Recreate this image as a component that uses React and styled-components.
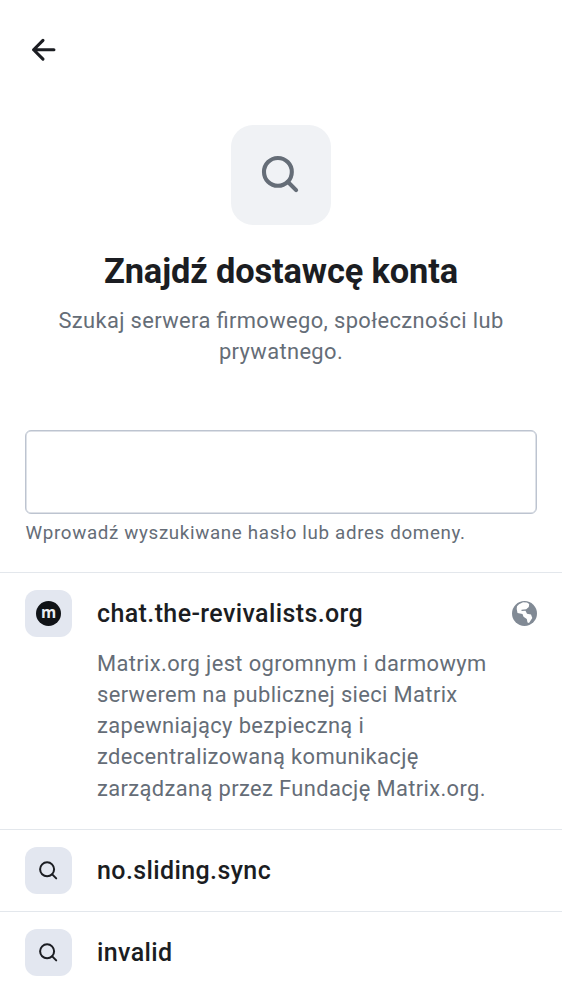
import React from 'react';
import styled, { createGlobalStyle } from 'styled-components';

const Global = createGlobalStyle`
  * { box-sizing: border-box; }
  body { margin: 0; background: #fff; font-family: Roboto, sans-serif; color: #1b1d22; }
`;

const Screen = styled.main`
  display: flex;
  flex-direction: column;
  width: 562px;
  height: 1000px;
  overflow: hidden;
`;

const TopBar = styled.header`
  display: flex;
  align-items: center;
  height: 100px;
  padding-left: 25px;
`;

const BackButton = styled.button`
  display: flex;
  padding: 0;
  border: 0;
  background: none;
  color: #1b1d22;
`;

const Hero = styled.section`
  display: flex;
  flex-direction: column;
  align-items: center;
  padding: 25px 25px 0;
  text-align: center;
`;

const HeroTile = styled.div`
  display: grid;
  place-items: center;
  width: 100px;
  height: 100px;
  border-radius: 22px;
  background: #f0f2f5;
  color: #656d77;
`;

const Title = styled.h1`
  margin: 24px 0 0;
  font-size: 34.4px;
  line-height: 44px;
  font-weight: 700;
  letter-spacing: -0.13px;
  white-space: nowrap;
`;

const Subtitle = styled.p`
  width: 470px;
  margin: 12px 0 0;
  font-size: 21.9px;
  line-height: 31.25px;
  letter-spacing: 0.37px;
  font-feature-settings: "liga" 1;
  color: #656d77;
`;

const Search = styled.label`
  display: flex;
  flex-direction: column;
  padding: 62px 25px 0;
`;

const SearchInput = styled.input`
  width: 512px;
  height: 84px;
  padding: 0 25px;
  border: 1px solid #bdc4d0;
  border-radius: 6px;
  box-shadow: inset 0 0 0 0.5px #bdc4d0;
  background: none;
  font: inherit;
  outline: none;
`;

const Hint = styled.span`
  margin: 7px 0 0 0.5px;
  font-size: 18.75px;
  line-height: 25px;
  letter-spacing: 0.66px;
  color: #656d77;
`;

const List = styled.ul`
  margin: 26px 0 0;
  padding: 0;
  list-style: none;
`;

const Item = styled.li`
  min-height: 82.4px;
  padding: 17px 25px ${p => (p.$tall ? 25 : 17)}px;
  border-top: 1px solid #e3e7ec;
`;

const Row = styled.div`
  display: flex;
  align-items: center;
  gap: 25px;
`;

const ItemTile = styled.div`
  display: grid;
  place-items: center;
  flex: none;
  width: 47px;
  height: 47px;
  border-radius: 12px;
  background: #e3e7f0;
`;

const ItemTitle = styled.span`
  flex: 1;
  padding-top: ${p => (p.$tall ? 2 : 0)}px;
  font-size: 25px;
  line-height: 37.5px;
  font-weight: 500;
  letter-spacing: 0.39px;
`;

const Description = styled.p`
  width: 400px;
  margin: 11px 0 0 72px;
  font-size: 21.9px;
  line-height: 31.25px;
  letter-spacing: 0.37px;
  color: #656d77;
`;

const MatrixMark = styled.span`
  display: flex;
  justify-content: center;
  width: 25px;
  height: 25px;
  border-radius: 50%;
  background: #101317;
  color: #e9edf2;
  font: 700 15.5px/23px "Open Sans", sans-serif;
`;

const BackIcon = () => (
  <svg width="37.5" height="37.5" viewBox="0 0 24 24" fill="none" stroke="currentColor" strokeWidth="2" strokeLinecap="round" strokeLinejoin="round">
    <path d="M11.5 6 5.5 12l6 6M5.5 12h13" />
  </svg>
);

const LargeSearchIcon = () => (
  <svg width="50" height="50" viewBox="0 0 50 50" fill="none" stroke="currentColor" strokeWidth="4.1" strokeLinecap="round">
    <circle cx="21.9" cy="21.9" r="13.9" />
    <path d="m32 32 8.1 8.1" />
  </svg>
);

const SearchIcon = () => (
  <svg width="25" height="25" viewBox="0 0 25 25" fill="none" stroke="currentColor" strokeWidth="2" strokeLinecap="round">
    <circle cx="11.1" cy="11.3" r="7" />
    <path d="m16.2 16.4 4 4" />
  </svg>
);

const GlobeIcon = () => (
  <svg width="25" height="25" viewBox="0 0 25 25">
    <circle cx="12.5" cy="12.5" r="12.5" fill="#818a95" />
    <path fill="#fff" d="M7 3.2 11 1.2 15 1.4 17.2 3 16.8 6 14.2 8.2 9.5 8.8V10l4-.2 1.5 2.9 4 .9 1.3 3.4L17 22l-1.5-.5-.7-3.5-3.3-2.2-1-2.7-5-1.1L4.7 8 5 5.3z" />
  </svg>
);

const providers = [
  {
    name: 'chat.the-revivalists.org',
    description:
      'Matrix.org jest ogromnym i darmowym serwerem na publicznej sieci Matrix zapewniający bezpieczną i zdecentralizowaną komunikację zarządzaną przez Fundację Matrix.org.',
    matrix: true,
  },
  { name: 'no.sliding.sync' },
  { name: 'invalid' },
];

export default function App() {
  return (
    <Screen>
      <Global />
      <TopBar>
        <BackButton aria-label="Wstecz"><BackIcon /></BackButton>
      </TopBar>
      <Hero>
        <HeroTile><LargeSearchIcon /></HeroTile>
        <Title>Znajdź dostawcę konta</Title>
        <Subtitle>Szukaj serwera firmowego, społeczności lub prywatnego.</Subtitle>
      </Hero>
      <Search>
        <SearchInput />
        <Hint>Wprowadź wyszukiwane hasło lub adres domeny.</Hint>
      </Search>
      <List>
        {providers.map(p => (
          <Item key={p.name} $tall={p.matrix}>
            <Row>
              <ItemTile>{p.matrix ? <MatrixMark>m</MatrixMark> : <SearchIcon />}</ItemTile>
              <ItemTitle $tall={p.matrix}>{p.name}</ItemTitle>
              {p.matrix && <GlobeIcon />}
            </Row>
            {p.description && <Description>{p.description}</Description>}
          </Item>
        ))}
      </List>
    </Screen>
  );
}
